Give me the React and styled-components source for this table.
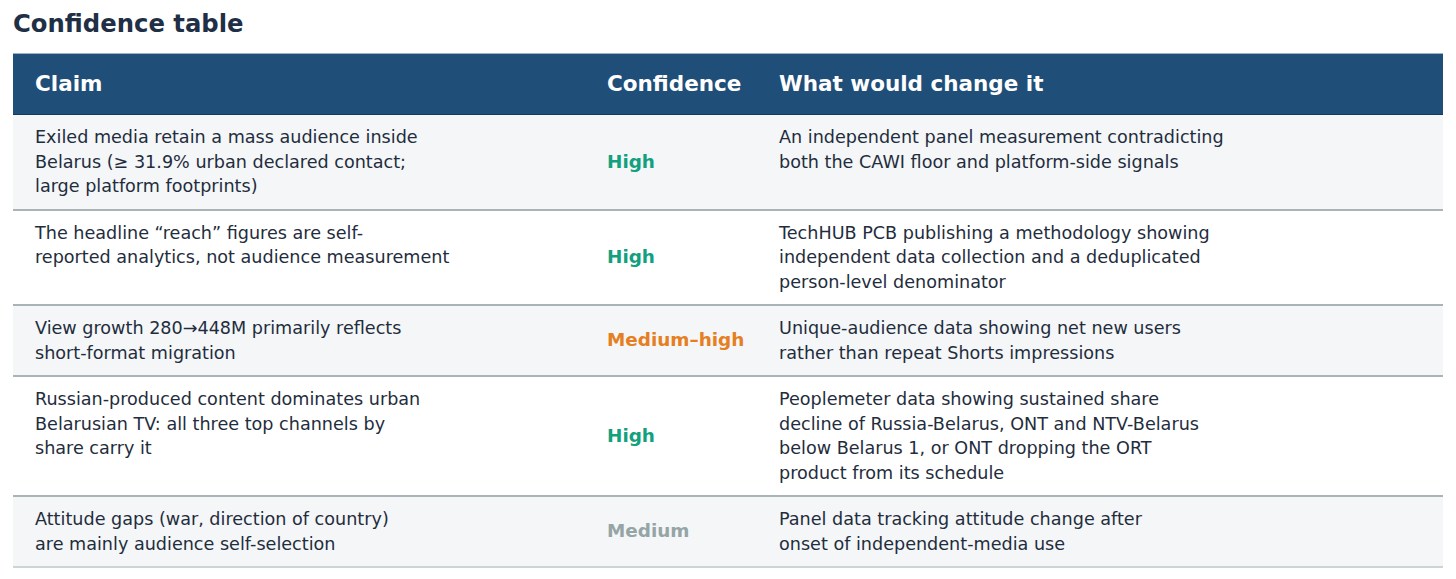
import React from "react";
import styled, { createGlobalStyle } from "styled-components";

const GlobalStyle = createGlobalStyle`
  body {
    margin: 0;
    background: #ffffff;
    font-family: "DejaVu Sans", Verdana, sans-serif;
    color: #1f2d3d;
  }
`;

const Page = styled.div`
  padding: 10px 13px 0;
`;

const Title = styled.h2`
  margin: 0 0 15px;
  font-size: 24.3px;
  line-height: 28px;
  font-weight: 700;
  color: #1f2f45;
`;

const Table = styled.div`
  display: grid;
  grid-template-columns: 572px 172px 1fr;
`;

const HeadCell = styled.div`
  background: #1f4e79;
  color: #ffffff;
  font-size: 21.5px;
  font-weight: 700;
  line-height: 24px;
  padding: 18px 22px 18px;
  white-space: nowrap;
  border-top: 1px solid #9fb3c6;
  border-bottom: 1px solid #163a5c;
  &:last-child {
    border-right: 1px solid #163a5c;
  }
`;

const Cell = styled.div`
  background: ${(p) => (p.$shaded ? "#f4f6f8" : "#ffffff")};
  border-bottom: 2px solid ${(p) => (p.$last ? "#cdd4d6" : "#a9b4b7")};
  padding: 10px 22px;
  font-size: 17.6px;
  line-height: 24.5px;
  color: #1f2d3d;
  display: flex;
  align-items: ${(p) => (p.$middle ? "center" : "flex-start")};
`;

const Level = styled.span`
  font-size: 18.4px;
  font-weight: 700;
  white-space: nowrap;
  color: ${(p) => p.$color};
`;

const levels = {
  high: { label: "High", color: "#12a07e" },
  medHigh: { label: "Medium–high", color: "#e67e22" },
  medium: { label: "Medium", color: "#95a5a6" },
};

const rows = [
  {
    claim: [
      "Exiled media retain a mass audience inside",
      "Belarus (≥ 31.9% urban declared contact;",
      "large platform footprints)",
    ],
    level: "high",
    change: [
      "An independent panel measurement contradicting",
      "both the CAWI floor and platform-side signals",
    ],
  },
  {
    claim: [
      "The headline “reach” figures are self-",
      "reported analytics, not audience measurement",
    ],
    level: "high",
    change: [
      "TechHUB PCB publishing a methodology showing",
      "independent data collection and a deduplicated",
      "person-level denominator",
    ],
  },
  {
    claim: ["View growth 280→448M primarily reflects", "short-format migration"],
    level: "medHigh",
    change: [
      "Unique-audience data showing net new users",
      "rather than repeat Shorts impressions",
    ],
  },
  {
    claim: [
      "Russian-produced content dominates urban",
      "Belarusian TV: all three top channels by",
      "share carry it",
    ],
    level: "high",
    change: [
      "Peoplemeter data showing sustained share",
      "decline of Russia-Belarus, ONT and NTV-Belarus",
      "below Belarus 1, or ONT dropping the ORT",
      "product from its schedule",
    ],
  },
  {
    claim: [
      "Attitude gaps (war, direction of country)",
      "are mainly audience self-selection",
    ],
    level: "medium",
    change: [
      "Panel data tracking attitude change after",
      "onset of independent-media use",
    ],
  },
];

const Lines = ({ lines }) => (
  <span>
    {lines.map((line, i) => (
      <React.Fragment key={i}>
        {i > 0 && <br />}
        {line}
      </React.Fragment>
    ))}
  </span>
);

export default function App() {
  return (
    <>
      <GlobalStyle />
      <Page>
        <Title>Confidence table</Title>
        <Table>
          <HeadCell>Claim</HeadCell>
          <HeadCell>Confidence</HeadCell>
          <HeadCell>What would change it</HeadCell>
          {rows.map((row, i) => {
            const shaded = i % 2 === 0;
            const last = i === rows.length - 1;
            const lvl = levels[row.level];
            return (
              <React.Fragment key={i}>
                <Cell $shaded={shaded} $last={last}>
                  <Lines lines={row.claim} />
                </Cell>
                <Cell $shaded={shaded} $last={last} $middle>
                  <Level $color={lvl.color}>{lvl.label}</Level>
                </Cell>
                <Cell $shaded={shaded} $last={last}>
                  <Lines lines={row.change} />
                </Cell>
              </React.Fragment>
            );
          })}
        </Table>
      </Page>
    </>
  );
}
